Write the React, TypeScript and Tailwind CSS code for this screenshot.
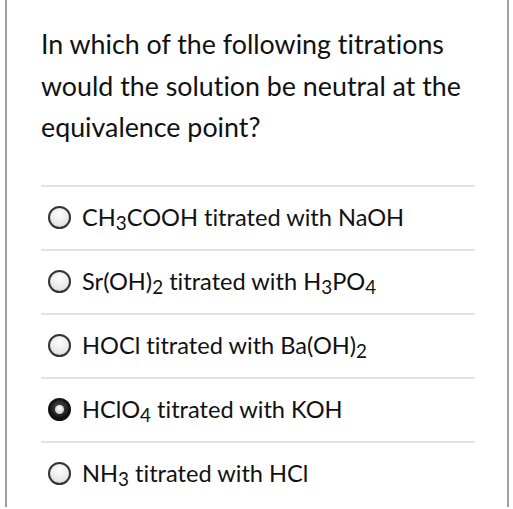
import React from "react";

const options: { parts: (string | [string])[]; selected?: boolean }[] = [
  { parts: ["CH", ["3"], "COOH titrated with NaOH"] },
  { parts: ["Sr(OH)", ["2"], " titrated with H", ["3"], "PO", ["4"]] },
  { parts: ["HOCl titrated with Ba(OH)", ["2"]] },
  { parts: ["HClO", ["4"], " titrated with KOH"], selected: true },
  { parts: ["NH", ["3"], " titrated with HCl"] },
];

function Radio({ selected }: { selected?: boolean }) {
  if (selected) {
    return (
      <div className="w-[23px] h-[23px] rounded-full flex items-center justify-center bg-[radial-gradient(circle_at_50%_40%,#555_0%,#111_70%)] border-2 border-[#111]">
        <div className="w-[9px] h-[9px] rounded-full bg-[radial-gradient(circle_at_50%_35%,#fff_0%,#bbb_100%)]" />
      </div>
    );
  }
  return (
    <div className="w-[23px] h-[23px] rounded-full border-2 border-[#333] bg-[radial-gradient(circle_at_50%_35%,#ffffff_0%,#e8e8e8_60%,#cfcfcf_100%)]" />
  );
}

export default function App() {
  return (
    <div className="w-[513px] h-[509px] bg-white overflow-hidden [font-variant-ligatures:none]" style={{ fontFamily: "Lato, 'Open Sans', sans-serif" }}>
      <div className="ml-[5px] w-[504px] h-[507px] border-l-2 border-r-2 border-[#a0a0a0] pl-[34px] pr-[32px] pt-[24px] text-[#111]">
        <div className="text-[26.8px] leading-[41.5px]">
          In which of the following titrations would the solution be neutral at the equivalence point?
        </div>
        <div className="mt-[36px] flex flex-col">
          {options.map((o, i) => (
            <div key={i} className="border-t-2 border-[#e2e2e2] h-[64px] flex items-center gap-[11px] pl-[7px]">
              <Radio selected={o.selected} />
              <span className="text-[23.6px] leading-none">
                {o.parts.map((p, j) =>
                  typeof p === "string" ? (
                    <React.Fragment key={j}>{p}</React.Fragment>
                  ) : (
                    <sub key={j} className="text-[0.8em]">{p[0]}</sub>
                  )
                )}
              </span>
            </div>
          ))}
        </div>
      </div>
    </div>
  );
}
